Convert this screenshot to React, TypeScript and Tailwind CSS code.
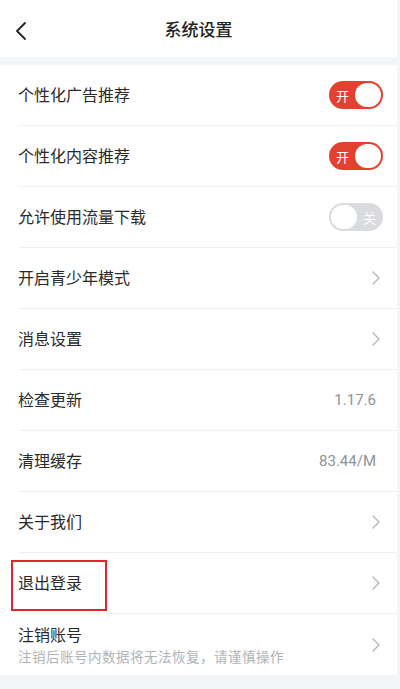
import React from 'react'

const font = { fontFamily: '"Noto Sans CJK SC", "Noto Sans", sans-serif' }

function Chevron() {
  return (
    <svg width="10" height="16" viewBox="0 0 10 16" fill="none" className="mr-[16px]">
      <path d="M2 2l6 6-6 6" stroke="#b4b7bc" strokeWidth="1.4" strokeLinecap="round" strokeLinejoin="round" />
    </svg>
  )
}

function Toggle({ on }: { on: boolean }) {
  if (on) {
    return (
      <div className="mr-[14px] flex h-[28px] w-[54px] items-center justify-between rounded-full bg-[#e2412f] pl-[7px] pr-[2px]">
        <span className="text-[13px] leading-none text-white">开</span>
        <div className="h-[24px] w-[26px] rounded-full bg-white" />
      </div>
    )
  }
  return (
    <div className="mr-[14px] flex h-[28px] w-[54px] items-center justify-between rounded-full bg-[#d9dbde] pl-[2px] pr-[7px]">
      <div className="h-[24px] w-[26px] rounded-full bg-white" />
      <span className="text-[13px] leading-none text-white">关</span>
    </div>
  )
}

type Row = {
  label: string
  right: 'on' | 'off' | 'chevron' | string
  sub?: string
  boxed?: boolean
}

const rows: Row[] = [
  { label: '个性化广告推荐', right: 'on' },
  { label: '个性化内容推荐', right: 'on' },
  { label: '允许使用流量下载', right: 'off' },
  { label: '开启青少年模式', right: 'chevron' },
  { label: '消息设置', right: 'chevron' },
  { label: '检查更新', right: '1.17.6' },
  { label: '清理缓存', right: '83.44/M' },
  { label: '关于我们', right: 'chevron' },
  { label: '退出登录', right: 'chevron', boxed: true },
  { label: '注销账号', right: 'chevron', sub: '注销后账号内数据将无法恢复，请谨慎操作' },
]

export default function App() {
  return (
    <div className="min-h-[689px] w-[400px] bg-[#f4f5f7]" style={font}>
      <div className="mr-[3px] bg-white">
        <header className="relative flex h-[57px] items-center justify-center">
          <svg width="14" height="20" viewBox="0 0 14 20" fill="none" className="absolute left-[14px] top-[21px]">
            <path d="M11 2L3 10l8 8" stroke="#222" strokeWidth="1.8" strokeLinecap="round" strokeLinejoin="round" />
          </svg>
          <h1 className="text-[17px] font-medium text-[#222]">系统设置</h1>
        </header>
      </div>
      <div className="h-[8px]" />
      <ul className="mr-[3px] bg-white">
        {rows.map((r, i) => (
          <li key={r.label} className="relative h-[61px] pl-[18px]">
            <div
              className={
                'flex h-full items-center justify-between ' +
                (i < rows.length - 1 ? 'border-b border-[#f0f1f3]' : '')
              }
            >
              {r.sub ? (
                <div className="flex flex-col">
                  <span className="text-[16px] leading-[23px] text-[#2a2a2a]">{r.label}</span>
                  <span className="text-[13.5px] leading-[20px] tracking-[0.5px] text-[#b0b3b8]">{r.sub}</span>
                </div>
              ) : (
                <span className="-mt-[3px] text-[16px] text-[#2a2a2a]">{r.label}</span>
              )}
              {r.right === 'on' && <Toggle on />}
              {r.right === 'off' && <Toggle on={false} />}
              {r.right === 'chevron' && <Chevron />}
              {r.right !== 'on' && r.right !== 'off' && r.right !== 'chevron' && (
                <span className="mr-[21px] text-[15px] text-[#8d929a]" style={{ fontFamily: 'Roboto, sans-serif' }}>
                  {r.right}
                </span>
              )}
            </div>
            {r.boxed && (
              <div className="pointer-events-none absolute left-[11px] top-[7px] h-[51px] w-[96px] border-2 border-[#e3262c]" />
            )}
          </li>
        ))}
      </ul>
    </div>
  )
}
